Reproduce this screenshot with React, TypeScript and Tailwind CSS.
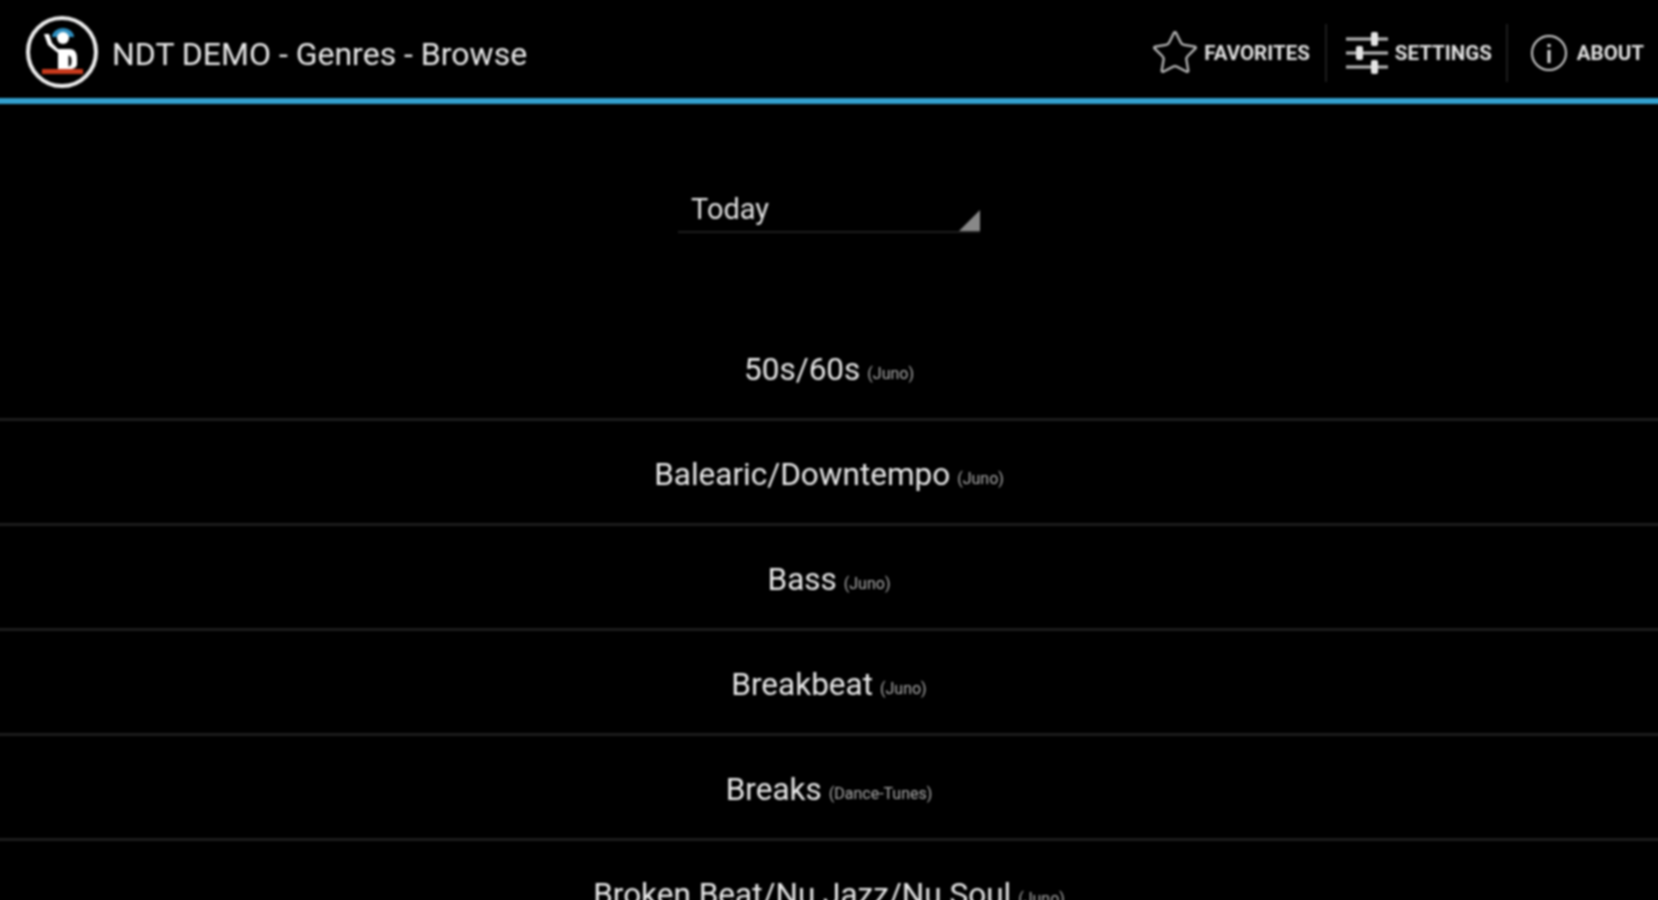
import React from 'react';
import { Star } from 'lucide-react';

const genres = [
  { name: '50s/60s', source: '(Juno)' },
  { name: 'Balearic/Downtempo', source: '(Juno)' },
  { name: 'Bass', source: '(Juno)' },
  { name: 'Breakbeat', source: '(Juno)' },
  { name: 'Breaks', source: '(Dance-Tunes)' },
  { name: 'Broken Beat/Nu Jazz/Nu Soul', source: '(Juno)' },
];

const Logo = () => (
  <svg width="74" height="74" viewBox="0 0 74 74" className="shrink-0 -mt-[4px]">
    <circle cx="37" cy="37" r="34" fill="none" stroke="#eeeeee" strokeWidth="4" />
    <path d="M27 22a11 9 0 0 1 22 0z" fill="#2f8fc0" />
    <circle cx="38" cy="23" r="6" fill="#ffffff" />
    <path d="M19 19h5l3 9 6 6h12c5 0 7 4 7 9v6c0 3-3 5-7 5H33V38L23 30z" fill="#ffffff" />
    <path d="M43 40c3 0 4 3 4 6s-1 6-4 6z" fill="#000000" stroke="#ffffff" strokeWidth="1" />
    <rect x="17" y="54" width="41" height="5" fill="#c93a1c" />
  </svg>
);

const Sliders = () => (
  <svg width="44" height="44" viewBox="0 0 44 44" className="shrink-0">
    <g fill="none" stroke="#bbbbbb" strokeWidth="3">
      <path d="M1 8h42M1 22h42M1 36h42" />
    </g>
    <g fill="#e4e4e4">
      <rect x="26" y="1" width="7" height="14" rx="2" />
      <rect x="11" y="15" width="7" height="14" rx="2" />
      <rect x="26" y="29" width="7" height="14" rx="2" />
    </g>
  </svg>
);

const Info = () => (
  <svg width="38" height="38" viewBox="0 0 38 38" className="shrink-0">
    <circle cx="19" cy="19" r="17" fill="none" stroke="#d0d0d0" strokeWidth="2" />
    <rect x="17.5" y="16" width="3" height="13" fill="#e0e0e0" />
    <rect x="17.5" y="10" width="3" height="3" fill="#e0e0e0" />
  </svg>
);

export default function App() {
  return (
    <div className="w-full h-[900px] overflow-hidden bg-black">
      <div className="-mx-[4px] px-[4px] font-['Roboto',sans-serif] text-[#e8e8e8] blur-[1px]">
        <header className="-mx-[4px] px-[4px] flex items-center h-[104px] pt-[10px] border-b-[6px] border-[#33a0cf]">
          <div className="ml-[25px] flex items-center gap-[13px]">
            <Logo />
            <span className="text-[32px] leading-none">NDT DEMO - Genres - Browse</span>
          </div>
          <nav className="ml-auto flex items-center h-[58px] -mt-[2px] text-[20.5px] font-bold text-[#e0e0e0]">
            <div className="flex items-center gap-[4px] pr-[15px] border-r-2 border-[#1e1e1e] h-full">
              <Star size={50} strokeWidth={1.1} color="#bbbbbb" />
              <span>FAVORITES</span>
            </div>
            <div className="flex items-center gap-[6px] pl-[18px] pr-[14px] border-r-2 border-[#1e1e1e] h-full">
              <Sliders />
              <span>SETTINGS</span>
            </div>
            <div className="flex items-center gap-[9px] pl-[22px] pr-[14px] h-full">
              <Info />
              <span>ABOUT</span>
            </div>
          </nav>
        </header>

        <div className="flex justify-center pt-[87px] h-[212px]">
          <div className="relative w-[302px] h-[42px] border-b-2 border-[#1e1e1e] pl-[13px] text-[29px] leading-[36px] text-[#e0e0e0]">
            Today
            <span className="absolute right-0 bottom-0 w-0 h-0 border-l-[21px] border-b-[21px] border-l-transparent border-b-[#888888]" />
          </div>
        </div>

        <ul className="-mx-[4px]">
          {genres.map(g => (
            <li key={g.name} className="flex items-center justify-center gap-[7px] h-[105px] pt-[6px] border-b-[3px] border-[#1c1c1c]">
              <span className="text-[31.5px] leading-none">{g.name}</span>
              <span className="text-[16px] leading-none pt-[8px] text-[#aaaaaa]">{g.source}</span>
            </li>
          ))}
        </ul>
      </div>
    </div>
  );
}
